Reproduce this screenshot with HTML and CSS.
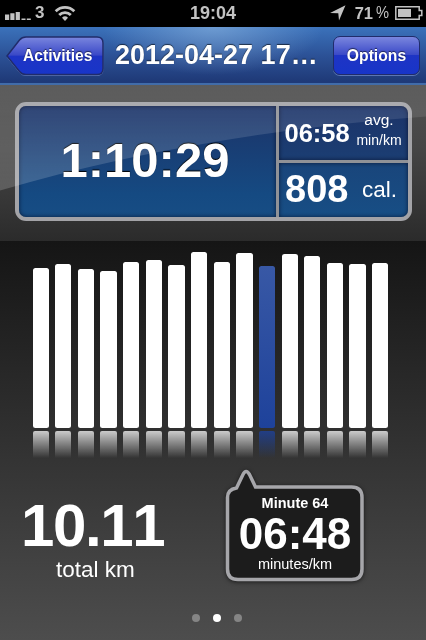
FILE: index.html
```html
<!DOCTYPE html>
<html lang="en">
<head>
<meta charset="utf-8">
<title>Activity</title>
<link rel="stylesheet" href="styles.css">
</head>
<body>
<div class="screen">
  <header class="status">
    <div class="carrier">
      <svg class="signal" width="26" height="10" viewBox="0 0 26 10"><path d="M0 4.500h4.200v5.500h-4.200zM5.300 3.300h4.200v6.700h-4.200zM10.700 2h4.200v8h-4.200zM16.500 8.500h4V10h-4zM21.800 8.500h4V10h-4z"/></svg>
      <span class="network">3</span>
      <svg class="wifi" width="22" height="17" viewBox="0 0 22 17"><path d="M1.700 6.300a13.200 13.200 0 0 1 18.600 0M5.200 10a8.200 8.200 0 0 1 11.600 0"/><path class="solid" d="M11 16l-3-3.300a4.300 4.300 0 0 1 6 0z"/></svg>
    </div>
    <span class="clock">19:04</span>
    <div class="power">
      <svg class="location" width="16" height="16" viewBox="0 0 16 16"><path d="M15.500.3L9 15.500 8.300 8.200 0 8z"/></svg>
      <span class="charge">71</span><span class="percent">%</span>
      <svg class="battery" width="28" height="14" viewBox="0 0 28 14"><path class="case" d="M.8.8h23.400v3.700h2.600v5h-2.600v3.700H.8z"/><path d="M3 3h13v8H3z"/></svg>
    </div>
  </header>

  <nav class="nav">
    <a class="back">
      <svg class="back-shape" width="98" height="41" viewBox="0 0 98 41">
        <defs><linearGradient id="btn" x1="0" y1="0" x2="0" y2="1"><stop offset="0" stop-color="#7a86de"/><stop offset=".49" stop-color="#3948c7"/><stop offset=".5" stop-color="#1e34c5"/><stop offset="1" stop-color="#1835c8"/></linearGradient></defs>
        <path class="back-glow" d="M1 21L13.500 4.500Q16 1.800 20 1.800H91Q97 1.800 97 7.800V33.800Q97 39.500 91 39.500H20Q16 39.500 13.500 36.500Z"/>
        <path class="back-face" fill="url(#btn)" d="M1 20L13.500 4Q16 1 20 1H91Q97 1 97 7V32.500Q97 38.500 91 38.500H20Q16 38.500 13.500 35.500Z"/>
      </svg>
      <span class="back-label">Activities</span>
    </a>
    <h1 class="title">2012-04-27 17…</h1>
    <a class="options">Options</a>
  </nav>

  <section class="summary">
    <div class="board">
      <div class="cell duration"><span>1:10:29</span></div>
      <div class="cell pace"><span class="pace-value">06:58</span><span class="pace-unit"><span class="avg">avg.</span><span class="per">min/km</span></span></div>
      <div class="cell energy"><span class="energy-value">808</span><span class="energy-unit">cal.</span></div>
    </div>
    <svg class="gloss" width="426" height="156" viewBox="0 0 426 156">
      <defs><linearGradient id="gl" x1="0" y1="0" x2="0" y2="1"><stop offset="0" stop-color="#fff" stop-opacity=".07"/><stop offset="1" stop-color="#fff" stop-opacity=".18"/></linearGradient></defs>
      <path fill="url(#gl)" d="M0 0H426V31.500C280 42 130 67 0 105.500Z"/>
    </svg>
  </section>

  <main class="details">
    <div class="chart">
      <i class="bar" style="height:159.700px"></i><i class="bar" style="height:164px"></i><i class="bar" style="height:159px"></i><i class="bar" style="height:157px"></i><i class="bar" style="height:166px"></i><i class="bar" style="height:167.700px"></i><i class="bar" style="height:163.300px"></i><i class="bar" style="height:176px"></i><i class="bar" style="height:166px"></i><i class="bar" style="height:175px"></i><i class="bar selected" style="height:162px"></i><i class="bar" style="height:174.500px"></i><i class="bar" style="height:172.300px"></i><i class="bar" style="height:164.700px"></i><i class="bar" style="height:164px"></i><i class="bar" style="height:165px"></i>
    </div>
    <div class="reflection">
      <i></i><i></i><i></i><i></i><i></i><i></i><i></i><i></i><i></i><i></i><i class="selected"></i><i></i><i></i><i></i><i></i><i></i>
    </div>
    <div class="totals">
      <div class="distance"><span class="distance-value">10.11</span><span class="distance-unit">total km</span></div>
      <div class="bubble">
        <svg class="bubble-shape" width="150" height="126" viewBox="0 0 150 126"><path d="M21.500 20L28 6.500Q31 .5 34.500 6.500L40.500 19H136.500Q147 19 147 29.500V101Q147 111.500 136.500 111.500H23Q12.500 111.500 12.500 101V29.500Q12.500 21.500 21.500 20Z"/></svg>
        <span class="minute">Minute 64</span>
        <span class="minute-value">06:48</span>
        <span class="minute-unit">minutes/km</span>
      </div>
    </div>
    <div class="pager"><i></i><i class="current"></i><i></i></div>
  </main>
</div>
</body>
</html>
```
FILE: styles.css
```css
* { box-sizing: border-box; }
body { margin: 0; background: #000; }
.screen {
  width: 426px;
  height: 640px;
  overflow: hidden;
  display: flex;
  flex-direction: column;
  color: #fff;
  font-family: "Liberation Sans", Arial, sans-serif;
  font-kerning: none;
}

/* status bar */
.status {
  height: 27px;
  padding-bottom: 1px;
  display: grid;
  grid-template-columns: 1fr auto 1fr;
  align-items: center;
  background: #000;
  color: #c3c3c3;
  fill: #c3c3c3;
  font-weight: bold;
  font-size: 18px;
  line-height: 26px;
}
.carrier, .power { display: flex; align-items: center; }
.carrier { padding-left: 5px; }
.signal { margin-top: 3px; }
.network { margin-left: 4px; font-size: 17px; }
.wifi { margin: 0 0 0 10px; }
.wifi path { fill: none; stroke: #c3c3c3; stroke-width: 2.800; }
.wifi .solid { fill: #c3c3c3; stroke: none; }
.power { justify-content: flex-end; padding-right: 3px; font-size: 16.500px; }
.location { margin-right: 9px; }
.percent { display: inline-block; width: 13px; margin: 0 6px 0 3px; font-weight: normal; font-size: 17px; transform: scaleX(.86); transform-origin: left; }
.case { fill: none; stroke: #c3c3c3; stroke-width: 1.500; }

/* navigation */
.nav {
  height: 58px;
  display: flex;
  align-items: flex-start;
  padding: 9px 6px 0;
  background: radial-gradient(ellipse 110px 48px at 50% 0, rgba(150,190,230,.55), transparent), linear-gradient(#3b72bb, #2c5297 50%, #1f3a78 96%);
  border-bottom: 2px solid #416ca9;
  text-shadow: 0 -1px 1px rgba(0,0,0,.6);
}
.back { position: relative; width: 98px; height: 41px; }
.back-shape { display: block; }
.back-glow { fill: none; stroke: rgba(130,155,215,.6); }
.back-face { stroke: #202c6b; stroke-width: 1.500; }
.back-label {
  position: absolute;
  left: 17px;
  top: 10px;
  font-size: 15.600px;
  font-weight: bold;
  line-height: 20px;
}
.title { margin: 4px 0 0 11px; width: 218px; font-size: 27px; line-height: 30px; white-space: nowrap; }
.options {
  width: 87px;
  height: 39px;
  border: 1.500px solid #202c6b;
  border-radius: 7px;
  background: linear-gradient(#7a86de, #3948c7 49%, #1e34c5 50%, #1835c8);
  box-shadow: 0 1px 0 rgba(130,155,215,.6);
  text-align: center;
  font-size: 15.700px;
  font-weight: bold;
  line-height: 37px;
}

/* summary board */
.summary {
  position: relative;
  height: 156px;
  padding: 17px 14px 0 15px;
  background: linear-gradient(#505050, #464646 40%, #2b2b2b);
}
.board {
  height: 119px;
  display: grid;
  grid-template-columns: 257px 1fr;
  grid-template-rows: 54px 1fr;
  gap: 3px;
  border: 4px solid #a3a3a7;
  border-radius: 11px;
  background: #909297;
}
.cell {
  display: flex;
  box-shadow: inset 0 0 4px rgba(0,0,20,.65);
}
.duration {
  grid-row: 1 / 3;
  align-items: center;
  justify-content: center;
  padding: 0 5px 3px 0;
  border-radius: 7px 0 0 7px;
  background: linear-gradient(#1c3368, #154a82 80%, #174d84);
  font-size: 49px;
  font-weight: bold;
  text-shadow: 0 -1px 1px #000;
}
.pace { padding: 0 0 0 5.500px; border-radius: 0 7px 0 0; background: linear-gradient(#1c3368, #1b3e73); }
.pace-value { width: 71px; font-size: 25.500px; font-weight: bold; line-height: 54px; }
.pace-unit { width: 47px; padding-top: 4px; display: flex; flex-direction: column; text-align: center; }
.avg { font-size: 15.500px; line-height: 20px; }
.per { font-size: 14px; line-height: 21px; }
.energy { padding: 0 0 0 6px; border-radius: 0 0 7px; background: linear-gradient(#19457b, #174e85); }
.energy-value { width: 64px; font-size: 38px; font-weight: bold; line-height: 52px; }
.energy-unit { margin-left: 13px; font-size: 22.500px; line-height: 53px; }
.gloss { position: absolute; left: 0; top: 0; mix-blend-mode: screen; pointer-events: none; }

/* chart */
.details {
  height: 399px;
  background: linear-gradient(#151515, #303030 48%, #4d4d4d);
}
.chart, .reflection { display: flex; gap: 6.350px; padding-left: 32.500px; }
.chart { height: 187px; align-items: flex-end; }
.bar { width: 16.300px; border-radius: 2.500px; background: #fff; }
.bar.selected { background: linear-gradient(#3858a5, #1e429b); }
.reflection { margin-top: 2.500px; height: 27px; }
.reflection i { width: 16.300px; border-radius: 2px 2px 0 0; background: linear-gradient(rgba(255,255,255,.75), rgba(255,255,255,0)); }
.reflection .selected { background: linear-gradient(rgba(30,66,155,.8), rgba(30,66,155,0)); }

/* totals */
.totals { height: 135px; display: flex; padding-top: 8.500px; }
.distance { width: 214px; padding-left: 20px; display: flex; flex-direction: column; }
.distance-value { margin: 28px 0 0 1px; font-size: 60px; font-weight: bold; line-height: 64px; letter-spacing: -1.400px; }
.distance-unit { margin: 0 0 0 36px; font-size: 22.500px; line-height: 24px; }
.bubble { position: relative; width: 162px; padding-top: 28px; display: flex; flex-direction: column; align-items: center; }
.bubble-shape { position: absolute; left: 1px; top: 2px; filter: drop-shadow(0 1px 2px rgba(0,0,0,.6)); }
.bubble-shape path { fill: #1c1c1c; stroke: #a6a6aa; stroke-width: 3.500; }
.bubble span { position: relative; }
.minute { font-size: 14.500px; font-weight: bold; line-height: 19px; }
.minute-value { font-size: 44px; font-weight: bold; line-height: 42px; }
.minute-unit { font-size: 14.500px; line-height: 19px; }

.pager { display: flex; justify-content: center; gap: 13px; padding: 21px 0 0 8px; }
.pager i { width: 8px; height: 8px; border-radius: 50%; background: #858585; }
.pager .current { background: #fff; }
```
